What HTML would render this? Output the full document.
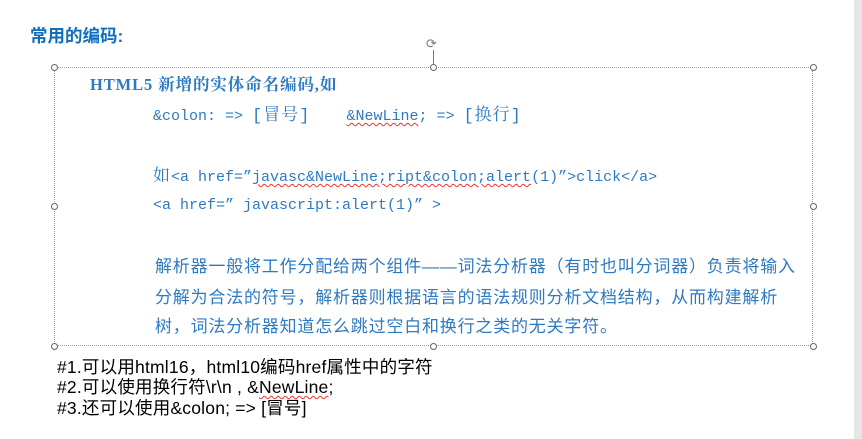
<!DOCTYPE html>
<html><head><meta charset="utf-8"><style>
body{margin:0;width:862px;height:439px;background:#fff;position:relative;overflow:hidden}
.t{position:absolute;white-space:pre;line-height:1}
.m{font-family:"Liberation Mono","Noto Serif CJK SC",monospace;font-size:15px;color:#2e7ac2}
.z{font-size:17px;letter-spacing:1px}
.c{font-family:"Liberation Sans","Noto Sans CJK SC",sans-serif;font-size:17px;color:#2e7ac2;letter-spacing:0.8px}
.k{font-family:"Liberation Sans","Noto Sans CJK SC",sans-serif;font-size:17.5px;color:#000;letter-spacing:0.2px}
.u{text-decoration:underline wavy #e33;text-decoration-thickness:1px;text-underline-offset:2px}
.h{position:absolute;width:7px;height:7px;border:1.3px solid #666;border-radius:50%;background:#fff;box-sizing:border-box}
</style></head><body>
<div style="position:absolute;right:0;top:0;width:8px;height:439px;background:#e6e6e6"></div>
<div class="t" style="left:30px;top:28px;font-family:'Liberation Sans','Noto Sans CJK SC',sans-serif;font-weight:bold;font-size:17.5px;color:#0e6ec0">常用的编码:</div>
<div style="position:absolute;left:54px;top:67px;width:759px;height:279px;border:1px dotted #999;box-sizing:border-box"></div>
<div style="position:absolute;left:433px;top:50px;width:1px;height:17px;background:#777"></div>
<div class="t" style="left:426px;top:38px;font-size:13px;color:#777;font-family:'DejaVu Sans',sans-serif">⟳</div>
<div class="h" style="left:51px;top:64px"></div><div class="h" style="left:430px;top:64px"></div><div class="h" style="left:810px;top:64px"></div>
<div class="h" style="left:51px;top:203px"></div><div class="h" style="left:810px;top:203px"></div>
<div class="h" style="left:51px;top:343px"></div><div class="h" style="left:430px;top:343px"></div><div class="h" style="left:810px;top:343px"></div>
<div class="t m" style="left:90px;top:77px;font-weight:bold;font-family:'Liberation Serif','Noto Serif CJK SC',serif;font-size:16.5px;letter-spacing:0.9px">HTML5 新增的实体命名编码,如</div>
<div class="t m" style="left:153px;top:108px">&amp;colon: =&gt; <span class="z">[冒号]</span>    <span class="u">&amp;NewLine</span>; =&gt; <span class="z">[换行]</span></div>
<div class="t m" style="left:153px;top:169px"><span class="z">如</span>&lt;a href=”<span class="u">javasc&amp;NewLine;ript&amp;colon;alert</span>(1)”&gt;click&lt;/a&gt;</div>
<div class="t m" style="left:153px;top:198px">&lt;a href=” javascript:alert(1)” &gt;</div>
<div class="t c" style="left:155px;top:258px">解析器一般将工作分配给两个组件——词法分析器（有时也叫分词器）负责将输入</div>
<div class="t c" style="left:155px;top:289px">分解为合法的符号，解析器则根据语言的语法规则分析文档结构，从而构建解析</div>
<div class="t c" style="left:155px;top:318px">树，词法分析器知道怎么跳过空白和换行之类的无关字符。</div>
<div class="t k" style="left:57px;top:359px">#1.可以用html16，html10编码href属性中的字符</div>
<div class="t k" style="left:57px;top:379px">#2.可以使用换行符\r\n , &amp;<span class="u">NewLine</span>;</div>
<div class="t k" style="left:57px;top:400px">#3.还可以使用&amp;colon; =&gt; [冒号]</div>
</body></html>
